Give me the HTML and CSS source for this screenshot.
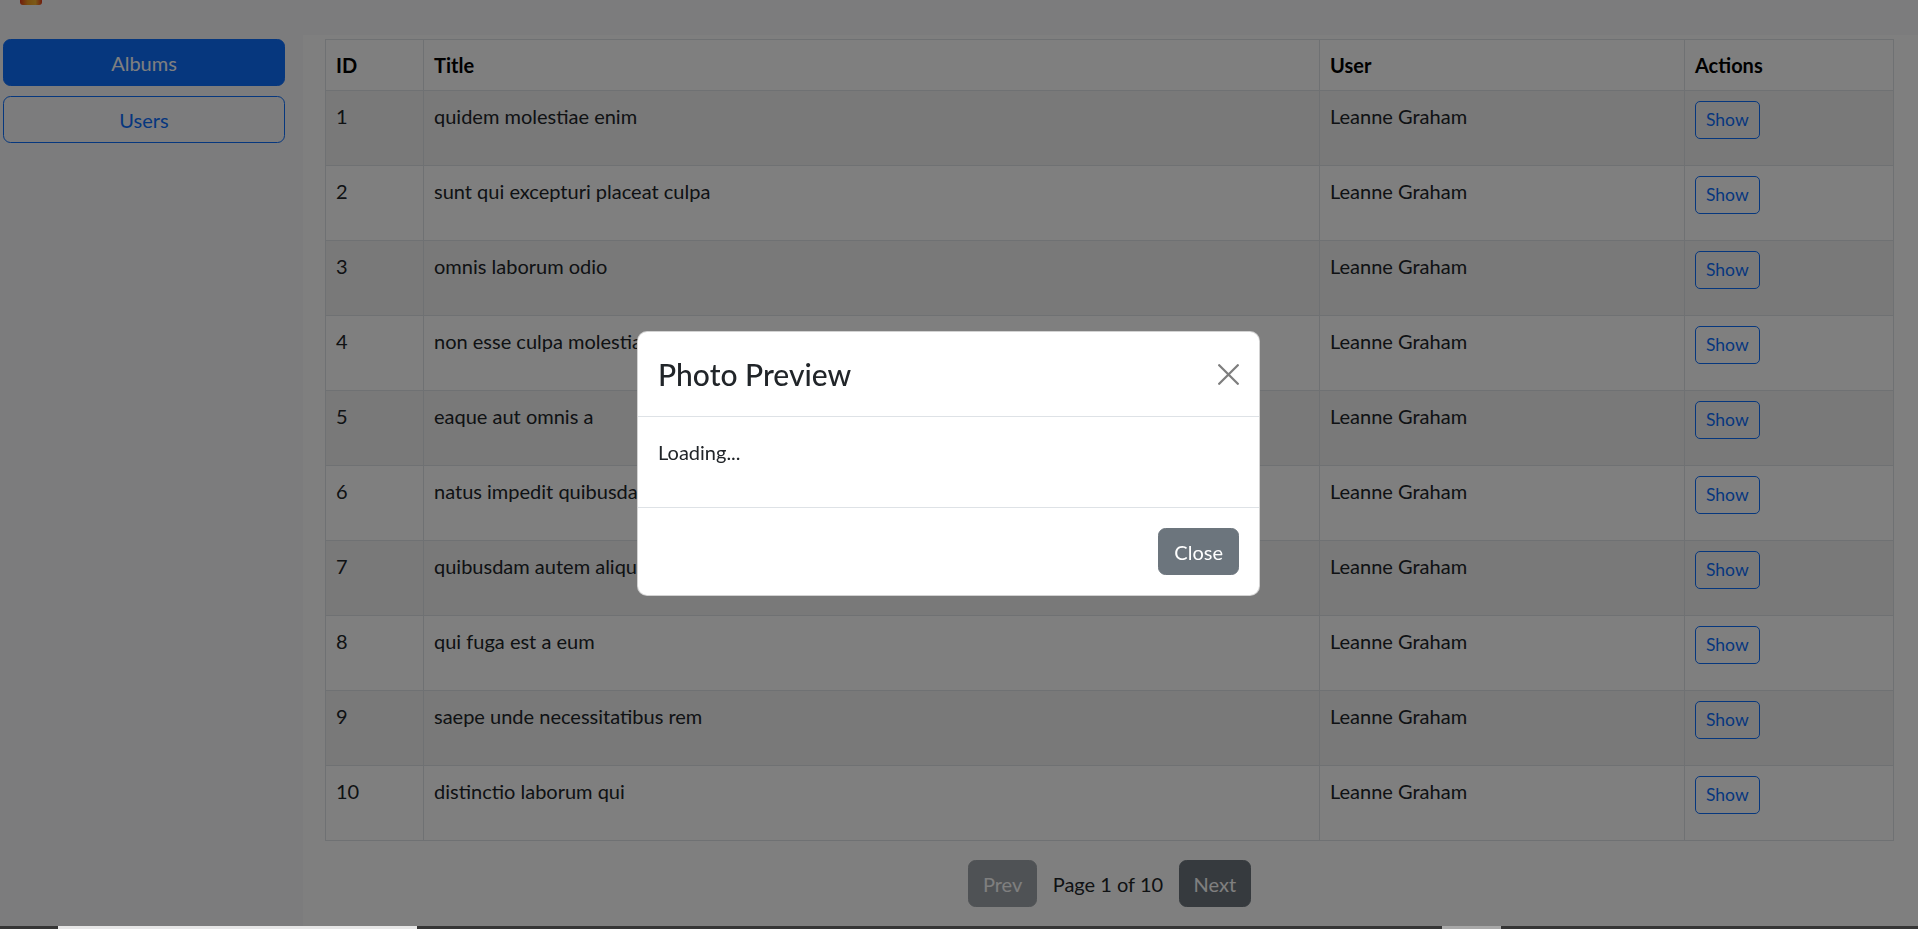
FILE: index.html
```html
<!DOCTYPE html>
<html lang="en">
<head>
<meta charset="utf-8">
<title>Albums</title>
<link rel="stylesheet" href="styles.css">
</head>
<body>
<div class="page">
  <nav class="navbar"><span class="logo"></span></nav>
  <div class="layout">
    <aside class="sidebar">
      <button class="btn btn-primary btn-block">Albums</button>
      <button class="btn btn-outline btn-block">Users</button>
    </aside>
    <main class="content">
      <table class="table">
        <colgroup>
          <col class="c-id"><col class="c-title"><col class="c-user"><col class="c-act">
        </colgroup>
        <thead>
          <tr><th>ID</th><th>Title</th><th>User</th><th>Actions</th></tr>
        </thead>
        <tbody>
          <tr><td>1</td><td>quidem molestiae enim</td><td>Leanne Graham</td><td><button class="btn-sm">Show</button></td></tr>
          <tr><td>2</td><td>sunt qui excepturi placeat culpa</td><td>Leanne Graham</td><td><button class="btn-sm">Show</button></td></tr>
          <tr><td>3</td><td>omnis laborum odio</td><td>Leanne Graham</td><td><button class="btn-sm">Show</button></td></tr>
          <tr><td>4</td><td>non esse culpa molestiae</td><td>Leanne Graham</td><td><button class="btn-sm">Show</button></td></tr>
          <tr><td>5</td><td>eaque aut omnis a</td><td>Leanne Graham</td><td><button class="btn-sm">Show</button></td></tr>
          <tr><td>6</td><td>natus impedit quibusdam illo est</td><td>Leanne Graham</td><td><button class="btn-sm">Show</button></td></tr>
          <tr><td>7</td><td>quibusdam autem aliquid et et quia</td><td>Leanne Graham</td><td><button class="btn-sm">Show</button></td></tr>
          <tr><td>8</td><td>qui fuga est a eum</td><td>Leanne Graham</td><td><button class="btn-sm">Show</button></td></tr>
          <tr><td>9</td><td>saepe unde necessitatibus rem</td><td>Leanne Graham</td><td><button class="btn-sm">Show</button></td></tr>
          <tr><td>10</td><td>distinctio laborum qui</td><td>Leanne Graham</td><td><button class="btn-sm">Show</button></td></tr>
        </tbody>
      </table>
      <div class="pager">
        <button class="btn btn-secondary btn-page disabled">Prev</button>
        <span class="pager-text">Page 1 of 10</span>
        <button class="btn btn-secondary btn-page">Next</button>
      </div>
    </main>
  </div>
</div>

<div class="backdrop"></div>

<div class="modal-wrap">
  <div class="modal">
    <div class="modal-header">
      <div class="modal-title">Photo Preview</div>
      <button class="btn-close" aria-label="Close">
        <svg width="21" height="21" viewBox="0 0 21 21"><path d="M1.2 1.2 L19.8 19.8 M19.8 1.2 L1.2 19.8" stroke="#000" stroke-width="2.3" stroke-linecap="round"/></svg>
      </button>
    </div>
    <div class="modal-body">
      <p>Loading...</p>
    </div>
    <div class="modal-footer">
      <button class="btn btn-secondary">Close</button>
    </div>
  </div>
</div>

<div class="taskbar"><span class="seg seg-a"></span><span class="seg seg-b"></span></div>
</body>
</html>
```

FILE: styles.css
```css
* { box-sizing: border-box; }

html, body {
  margin: 0;
  height: 929px;
  overflow: hidden;
}

body {
  font-family: "Segoe UI", Lato, "Liberation Sans", sans-serif;
  font-size: 20px;
  line-height: 1.5;
  color: #212529;
  background: #fff;
}

.page {
  height: 929px;
  display: flex;
  flex-direction: column;
}

.navbar {
  height: 35px;
  flex: 0 0 35px;
  background: #f8f9fa;
  display: flex;
  align-items: flex-start;
  padding-left: 20px;
}

.logo {
  display: block;
  width: 22px;
  height: 5px;
  border-radius: 0 0 3px 3px;
  background: linear-gradient(90deg, #e0391a 0%, #f29a1f 35%, #f6b430 70%, #e0391a 100%);
}

.layout {
  flex: 1;
  display: flex;
}

.sidebar {
  width: 303px;
  flex: 0 0 303px;
  background: #f8f9fa;
  padding: 4px 18px 0 3px;
}

.content {
  flex: 1;
  background: #fff;
  padding: 4px 25px 0 22px;
}

.btn {
  font-family: inherit;
  font-size: 20px;
  line-height: 30px;
  padding: 7.5px 15px;
  border: 1px solid transparent;
  border-radius: 7.5px;
  cursor: pointer;
}

.btn-block {
  display: block;
  width: 100%;
  height: 47px;
  margin-bottom: 10px;
}

.btn-primary {
  background: #0d6efd;
  border-color: #0d6efd;
  color: #fff;
}

.btn-outline {
  background: transparent;
  border-color: #0d6efd;
  color: #0d6efd;
}

.btn-secondary {
  background: #6c757d;
  border-color: #6c757d;
  color: #fff;
  height: 47px;
}

.btn-secondary.disabled {
  opacity: 0.65;
}

.btn-page {
  padding-left: 13.5px;
  padding-right: 13.5px;
}

.table {
  width: 1568px;
  table-layout: fixed;
  border-collapse: collapse;
  border: 1px solid #dee2e6;
}

.c-id { width: 98px; }
.c-title { width: 896px; }
.c-user { width: 365px; }
.c-act { width: 209px; }

.table th,
.table td {
  border: 1px solid #dee2e6;
  padding: 10px;
  text-align: left;
  vertical-align: top;
  line-height: 30px;
}

.table th {
  font-weight: 700;
  color: #000;
}

.table tbody tr {
  height: 75px;
}

.table tbody tr:nth-child(odd) td {
  background: #f2f2f2;
}

.btn-sm {
  font-family: inherit;
  font-size: 17.5px;
  line-height: 1.5;
  padding: 5px 10px;
  border: 1px solid #0d6efd;
  border-radius: 5px;
  color: #0d6efd;
  background: transparent;
  cursor: pointer;
}

.pager {
  display: flex;
  justify-content: center;
  align-items: center;
  gap: 16px;
  margin-top: 19px;
}

.pager-text {
  font-size: 20px;
}

.backdrop {
  position: fixed;
  inset: 0;
  background: rgba(0, 0, 0, 0.5);
}

.modal-wrap {
  position: fixed;
  inset: 0;
  padding-right: 21px;
  padding-bottom: 2px;
  display: flex;
  align-items: center;
  justify-content: center;
}

.modal {
  width: 623px;
  background: #fff;
  border: 1px solid rgba(0, 0, 0, 0.175);
  border-radius: 10px;
}

.modal-header {
  height: 85px;
  display: flex;
  align-items: center;
  justify-content: space-between;
  padding: 0 20px;
  border-bottom: 1px solid #dee2e6;
}

.modal-title {
  font-size: 30px;
  font-weight: 500;
  line-height: 1.2;
  color: #212529;
}

.btn-close {
  width: 21px;
  height: 21px;
  padding: 0;
  border: 0;
  background: transparent;
  opacity: 0.5;
  display: flex;
  cursor: pointer;
}

.modal-body {
  padding: 20px;
  border-bottom: 1px solid #dee2e6;
}

.modal-body p {
  margin: 0 0 20px;
  line-height: 30px;
}

.modal-footer {
  display: flex;
  justify-content: flex-end;
  padding: 15px;
}

.modal-footer .btn {
  margin: 5px;
}

.taskbar {
  position: fixed;
  left: 0;
  right: 0;
  bottom: 0;
  height: 3px;
  background: #353535;
}

.seg {
  position: absolute;
  top: 0;
  height: 3px;
}

.seg-a {
  left: 58px;
  width: 359px;
  background: #e6e6e6;
}

.seg-b {
  left: 1442px;
  width: 59px;
  background: #a8a8a8;
}
```
